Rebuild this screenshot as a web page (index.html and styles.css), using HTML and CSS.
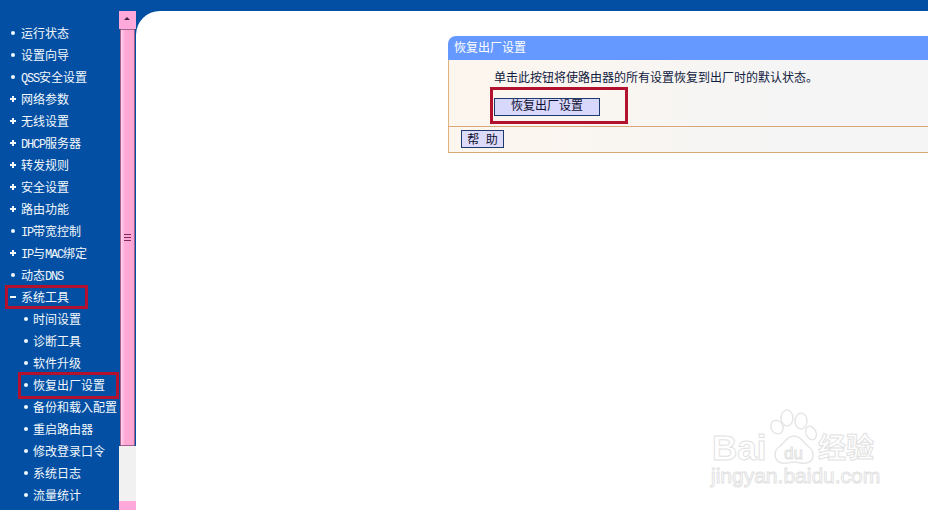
FILE: index.html
```html
<!DOCTYPE html>
<html lang="zh-CN">
<head>
  <meta charset="UTF-8" />
  <title>恢复出厂设置</title>
  <link rel="stylesheet" href="styles.css">
</head>
<body>
  <div class="frame">
    <nav class="menu">
      <ul class="menu-list">
        <li class="item dot">运行状态</li>
        <li class="item dot">设置向导</li>
        <li class="item dot"><span class="latin">QSS</span>安全设置</li>
        <li class="item plus">网络参数</li>
        <li class="item plus">无线设置</li>
        <li class="item plus"><span class="latin">DHCP</span>服务器</li>
        <li class="item plus">转发规则</li>
        <li class="item plus">安全设置</li>
        <li class="item plus">路由功能</li>
        <li class="item dot"><span class="latin">IP</span>带宽控制</li>
        <li class="item plus"><span class="latin">IP</span>与<span class="latin">MAC</span>绑定</li>
        <li class="item dot">动态<span class="latin">DNS</span></li>
        <li class="item minus marked-top">系统工具</li>
        <li class="item sub dot">时间设置</li>
        <li class="item sub dot">诊断工具</li>
        <li class="item sub dot">软件升级</li>
        <li class="item sub dot marked-sub">恢复出厂设置</li>
        <li class="item sub dot">备份和载入配置</li>
        <li class="item sub dot">重启路由器</li>
        <li class="item sub dot">修改登录口令</li>
        <li class="item sub dot">系统日志</li>
        <li class="item sub dot">流量统计</li>
      </ul>
    </nav>

    <div class="scrollbar">
      <div class="scroll-btn"><span class="arrow"></span></div>
      <div class="scroll-thumb"><span class="grip"></span></div>
      <div class="scroll-track"></div>
      <div class="scroll-btn"></div>
    </div>

    <main class="content">
      <section class="panel">
        <h2 class="panel-title">恢复出厂设置</h2>
        <div class="panel-body">
          <p class="panel-text">单击此按钮将使路由器的所有设置恢复到出厂时的默认状态。</p>
          <div class="reset-wrap">
            <button class="btn btn-reset">恢复出厂设置</button>
          </div>
        </div>
        <div class="panel-foot">
          <button class="btn btn-help">帮 助</button>
        </div>
      </section>

      <svg class="watermark" viewBox="0 0 180 90" width="180" height="90">
        <g class="wm-shape">
          <ellipse cx="72" cy="22" rx="6" ry="7" transform="rotate(-30 72 22)"/>
          <ellipse cx="82" cy="13" rx="6" ry="8"/>
          <ellipse cx="96" cy="16" rx="6" ry="8"/>
          <ellipse cx="106" cy="28" rx="5" ry="7" transform="rotate(-25 106 28)"/>
          <path d="M89 31c7 0 10 7 15 11 6 4 6 15-3 16-6 1-8-1-12-1s-7 2-12 1c-8-1-9-12-3-16 5-4 8-11 15-11z"/>
        </g>
        <text class="wm-text wm-bai" x="7" y="55">Bai</text>
        <text class="wm-text wm-du" x="79" y="54">du</text>
        <text class="wm-text wm-cn" x="113" y="53">经验</text>
        <text class="wm-text wm-url" x="6" y="78">jingyan.baidu.com</text>
      </svg>
    </main>
  </div>
</body>
</html>
```

FILE: styles.css
```css
*, *::before, *::after { box-sizing: border-box; }

html, body {
  margin: 0;
  height: 100%;
  overflow: hidden;
}

body {
  background: #024fa3;
  font-family: "Noto Sans CJK SC", "Liberation Sans", sans-serif;
  font-size: 12px;
}

.frame {
  display: flex;
  width: 928px;
  height: 510px;
}

/* Left menu */
.menu {
  width: 119px;
  flex: none;
  padding-top: 22px;
  color: #f2f8fc;
}

.menu-list {
  list-style: none;
  margin: 0;
  padding: 0;
}

.item {
  position: relative;
  height: 22px;
  line-height: 22px;
  padding-left: 21px;
  white-space: nowrap;
}

.item.sub {
  padding-left: 33px;
}

.latin {
  font-family: "Liberation Mono", monospace;
  letter-spacing: -1.2px;
}

.item::before {
  content: '';
  position: absolute;
  left: 11px;
  top: 9px;
  width: 4px;
  height: 4px;
  border-radius: 50%;
  background: #f2f8fc;
}

.item.sub::before {
  left: 24px;
}

.item.plus::before {
  left: 10px;
  top: 8px;
  width: 6px;
  height: 6px;
  border-radius: 0;
  background:
    linear-gradient(#f2f8fc, #f2f8fc) center / 6px 2px no-repeat,
    linear-gradient(#f2f8fc, #f2f8fc) center / 2px 6px no-repeat;
}

.item.minus::before {
  left: 10px;
  top: 10px;
  width: 6px;
  height: 2px;
  border-radius: 0;
}

/* Red annotation boxes */
.marked-top::after,
.marked-sub::after,
.reset-wrap::after {
  content: '';
  position: absolute;
  border: 3px solid #b3122f;
}

.marked-top::after {
  left: 5px;
  top: -1px;
  width: 83px;
  height: 24px;
}

.marked-sub::after {
  left: 18px;
  top: -2px;
  width: 101px;
  height: 27px;
}

/* Scrollbar */
.scrollbar {
  width: 17px;
  flex: none;
  display: flex;
  flex-direction: column;
  margin-top: 11px;
}

.scroll-btn {
  height: 18px;
  flex: none;
  background: #ffa8da;
  position: relative;
}

.arrow {
  position: absolute;
  left: 5px;
  top: 6px;
  border-left: 3px solid transparent;
  border-right: 3px solid transparent;
  border-bottom: 3px solid #4a2040;
}

.scroll-thumb {
  height: 417px;
  flex: none;
  margin: 0 1px;
  border: 1px solid #a8608c;
  border-radius: 1px;
  background: linear-gradient(90deg, #ffd6ec 0, #ffa8d6 30%, #ffa8d6 80%, #f8a0d0 100%);
  display: flex;
  align-items: center;
  justify-content: center;
}

.grip {
  width: 7px;
  height: 8px;
  background: repeating-linear-gradient(#7a2a5c 0, #7a2a5c 1px, transparent 1px, transparent 3px);
}

.scroll-track {
  height: 55px;
  flex: none;
  background: #f1f1f1;
}

/* Right side */
.content {
  position: relative;
  flex: 1;
  min-width: 0;
  margin-top: 11px;
  padding: 25px 0 0 312px;
  background: #fff;
  border-top-left-radius: 24px;
  overflow: hidden;
}

.panel {
  width: 490px;
}

.panel-title {
  margin: 0;
  height: 24px;
  line-height: 22px;
  padding-left: 6px;
  font-size: 12px;
  font-weight: normal;
  color: #fff;
  background: #6699ff;
  border-top-left-radius: 8px;
}

.panel-body {
  height: 67px;
  padding: 8px 0 0 45px;
  background: linear-gradient(90deg, #fdf6ee 0, #f5f5f5 70%);
  border-left: 1px solid #e2b27f;
  border-bottom: 1px solid #d9a878;
}

.panel-text {
  margin: 0;
  height: 18px;
  line-height: 18px;
  color: #102040;
}

.reset-wrap {
  position: relative;
  margin-top: 12px;
}

.reset-wrap::after {
  left: -4px;
  top: -11px;
  width: 138px;
  height: 37px;
}

.btn {
  display: block;
  padding: 0;
  height: 18px;
  line-height: 16px;
  font-family: inherit;
  font-size: 12px;
  color: #101030;
  background: #d8d8fc;
  border: 1px solid #1c3a6e;
}

.btn-reset {
  width: 106px;
  line-height: 12px;
  padding-bottom: 4px;
}

.panel-foot {
  height: 26px;
  padding: 3px 0 0 12px;
  background: linear-gradient(90deg, #fdf6ee 0, #f5f5f5 70%);
  border-left: 1px solid #e2b27f;
  border-bottom: 1px solid #d9a878;
}

.btn-help {
  width: 43px;
  word-spacing: 4px;
  background: #dcdcfa;
}

/* Watermark */
.watermark {
  position: absolute;
  left: 569px;
  top: 394px;
}

.wm-shape {
  fill: #fff;
  stroke: #e6e6e6;
  stroke-width: 1.5;
}

.wm-text {
  fill: #fff;
  stroke: #e2e2e2;
  stroke-width: 1;
  font-family: "Liberation Sans", sans-serif;
}

.wm-bai {
  font-size: 35px;
  font-weight: bold;
}

.wm-du {
  font-size: 17px;
}

.wm-cn {
  font-family: "Noto Sans CJK SC", sans-serif;
  font-size: 28px;
  font-weight: bold;
}

.wm-url {
  font-size: 21px;
}
```
